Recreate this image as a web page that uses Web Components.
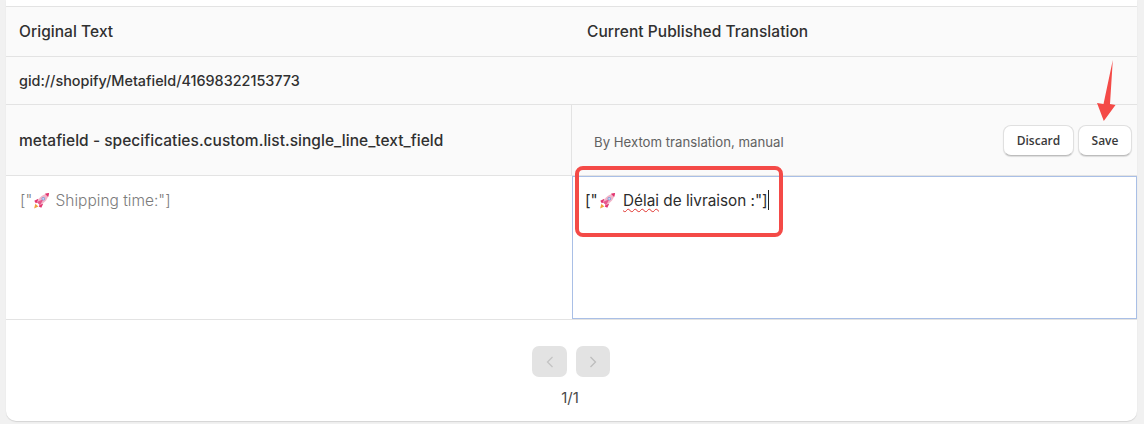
<!DOCTYPE html>
<html lang="en">
<head>
<meta charset="utf-8">
<title>Translation editor</title>
<style>
  html, body { margin: 0; height: 424px; overflow: hidden; background: #f1f1f1; }
  body { font-family: Inter, "Liberation Sans", sans-serif; color: #303030; position: relative; }
</style>
</head>
<body>
<translation-card>
  <table-row kind="head">
    <span slot="left">Original Text</span>
    <span slot="right">Current Published Translation</span>
  </table-row>
  <table-row kind="gid">
    <span slot="left">gid://shopify/Metafield/41698322153773</span>
  </table-row>
  <field-row label="metafield - specificaties.custom.list.single_line_text_field" source="By Hextom translation, manual"></field-row>
  <text-row></text-row>
  <page-nav></page-nav>
</translation-card>
<red-marks></red-marks>

<script>
const ROCKET = `<svg width="19" height="19" viewBox="0 0 18 18" aria-hidden="true">
  <path d="M2 16.5 3.2 12 6 14.8Z" fill="#f0a13c"/>
  <path d="M2.2 9.2 6 7.4 5.8 10.5 3.6 11.6Z" fill="#e2336f"/>
  <path d="M8.8 15.9 10.6 12 7.6 12.4 6.4 14.6Z" fill="#e2336f"/>
  <path d="M4.6 10.4C7 5.800 10.6 2.800 16.2 1.800 15.300 7.400 12.2 11 7.600 13.4Z" fill="#f2b4c8"/>
  <path d="M12.2 2.700C13.800 2.200 15 2 16.200 1.800 16 3 15.700 4.300 15.300 5.800Z" fill="#e2336f"/>
  <path d="M4.600 10.400 11 7.500 7.600 13.400Z" fill="#e8588c"/>
  <circle cx="10.700" cy="7.300" r="1.700" fill="#7f9ad6"/>
  <circle cx="10.700" cy="7.300" r="1" fill="#c8d6f2"/>
</svg>`;

class TranslationCard extends HTMLElement {
  constructor() {
    super();
    this.attachShadow({ mode: 'open' }).innerHTML = `
      <style>
        :host {
          display: block;
          box-sizing: border-box;
          width: 1131px;
          height: 421px;
          margin-left: 6px;
          padding-top: 6px;
          background: #fff;
          border-radius: 0 0 10px 10px;
          box-shadow: 0 1px 1px rgba(0,0,0,.12);
          overflow: hidden;
        }
      </style>
      <slot></slot>`;
  }
}

class TableRow extends HTMLElement {
  constructor() {
    super();
    this.attachShadow({ mode: 'open' }).innerHTML = `
      <style>
        :host {
          display: grid;
          grid-template-columns: 568px 1fr;
          align-items: center;
          box-sizing: border-box;
          background: #fafafa;
          border-top: 1px solid #e3e3e3;
          font-size: 15.5px;
          letter-spacing: .05px;
          font-weight: 500;
          color: #303030;
        }
        :host([kind="head"]) { height: 50px; }
        :host([kind="gid"]) { height: 48px; font-size: 14.4px; letter-spacing: 0; }
        .l { padding-left: 13px; }
        .r { padding-left: 13px; }
      </style>
      <div class="l"><slot name="left"></slot></div>
      <div class="r"><slot name="right"></slot></div>`;
  }
}

class FieldRow extends HTMLElement {
  constructor() {
    super();
    this.attachShadow({ mode: 'open' }).innerHTML = `
      <style>
        :host {
          display: grid;
          grid-template-columns: 565px 1fr;
          box-sizing: border-box;
          height: 72px;
          background: #fafafa;
          border-top: 1px solid #e3e3e3;
          border-bottom: 1px solid #e3e3e3;
        }
        .label {
          display: flex;
          align-items: center;
          padding: 1px 0 0 13px;
          font-size: 15.5px;
          letter-spacing: .03px;
          font-weight: 500;
          color: #303030;
        }
        .side {
          display: flex;
          align-items: center;
          justify-content: space-between;
          padding: 0 5px 0 22px;
          border-left: 1px solid #e3e3e3;
        }
        .source { font-size: 13.2px; color: #616161; padding-top: 3px; }
        .btns { display: flex; gap: 4px; }
      </style>
      <div class="label"></div>
      <div class="side">
        <span class="source"></span>
        <div class="btns">
          <small-button style="width:71px">Discard</small-button>
          <small-button style="width:54px">Save</small-button>
        </div>
      </div>`;
    this.shadowRoot.querySelector('.label').textContent = this.getAttribute('label');
    this.shadowRoot.querySelector('.source').textContent = this.getAttribute('source');
  }
}

class SmallButton extends HTMLElement {
  constructor() {
    super();
    this.attachShadow({ mode: 'open' }).innerHTML = `
      <style>
        :host {
          display: flex;
          align-items: center;
          justify-content: center;
          box-sizing: border-box;
          height: 31px;
          background: #fff;
          border: 1px solid #e0e0e0;
          border-bottom-color: #bdbdbd;
          border-radius: 8px;
          box-shadow: 0 1px 1px rgba(0,0,0,.12);
          font: 600 12px "Open Sans", "Noto Sans", sans-serif;
          color: #3a3a3a;
        }
      </style>
      <slot></slot>`;
  }
}

class TextRow extends HTMLElement {
  constructor() {
    super();
    this.attachShadow({ mode: 'open' }).innerHTML = `
      <style>
        :host {
          display: grid;
          grid-template-columns: 566px 1fr;
          box-sizing: border-box;
          height: 144px;
          background: #fff;
          border-bottom: 1px solid #e3e3e3;
          font-size: 15.5px;
          font-weight: 400;
        }
        .src { padding: 14px 0 0 14px; color: #7c7c7c; font-weight: 300; }
        .edit {
          box-sizing: border-box;
          height: 143px;
          padding: 13px 0 0 12px;
          border: 1px solid #a9bfe6;
          color: #2c2c2c;
          font-size: 15.3px;
          white-space: pre;
        }
        .edit svg { margin-right: 2px; }
        .line { display: flex; align-items: center; height: 20px; white-space: pre; }
        svg { display: block; flex: none; }
        .w { text-decoration: underline wavy #e0332e; text-decoration-thickness: 1.2px; text-underline-offset: 2px; text-decoration-skip-ink: none; }
        .caret { width: 1px; height: 20px; background: #222; }
      </style>
      <div class="src"><div class="line">["${ROCKET}<span> Shipping time:"]</span></div></div>
      <div class="edit"><div class="line">["${ROCKET}<span> <span class="w">Délai</span> de livraison :"]</span><i class="caret"></i></div></div>`;
  }
}

class PageNav extends HTMLElement {
  constructor() {
    super();
    this.attachShadow({ mode: 'open' }).innerHTML = `
      <style>
        :host {
          display: flex;
          flex-direction: column;
          align-items: center;
          padding-top: 26px;
          font-size: 15px;
          color: #4a4a4a;
        }
        .btns { display: flex; gap: 9px; margin-bottom: 11px; margin-left: -1px; }
        .b {
          display: flex;
          align-items: center;
          justify-content: center;
          width: 35px;
          height: 31px;
          background: #e3e3e3;
          border-radius: 7px;
        }
        .b + .b { width: 34px; }
        .t { margin-left: -3px; }
        svg { display: block; }
      </style>
      <div class="btns">
        <div class="b"><svg width="10" height="14" viewBox="0 0 10 14"><path d="M7.5 2 2.5 7l5 5" fill="none" stroke="#c4c4c4" stroke-width="1.3"/></svg></div>
        <div class="b"><svg width="10" height="14" viewBox="0 0 10 14"><path d="M2.5 2l5 5-5 5" fill="none" stroke="#bdbdbd" stroke-width="1.3"/></svg></div>
      </div>
      <div class="t">1/1</div>`;
  }
}

// annotations drawn over the screenshot
class RedMarks extends HTMLElement {
  constructor() {
    super();
    this.attachShadow({ mode: 'open' }).innerHTML = `
      <style>
        :host { display: block; position: absolute; left: 0; top: 0; width: 1144px; height: 424px; pointer-events: none; }
        .box {
          position: absolute;
          left: 575px; top: 166px;
          width: 208px; height: 71px;
          box-sizing: border-box;
          border: 4px solid #f44a47;
          border-radius: 8px;
        }
        svg { position: absolute; left: 1090px; top: 55px; }
      </style>
      <div class="box"></div>
      <svg width="34" height="70" viewBox="0 0 34 70"><path d="M22.8 5 20 49 25.5 50 13.8 66 7 48 13.5 49Z" fill="#f44a47"/></svg>`;
  }
}

customElements.define('translation-card', TranslationCard);
customElements.define('table-row', TableRow);
customElements.define('field-row', FieldRow);
customElements.define('small-button', SmallButton);
customElements.define('text-row', TextRow);
customElements.define('page-nav', PageNav);
customElements.define('red-marks', RedMarks);
</script>
</body>
</html>
